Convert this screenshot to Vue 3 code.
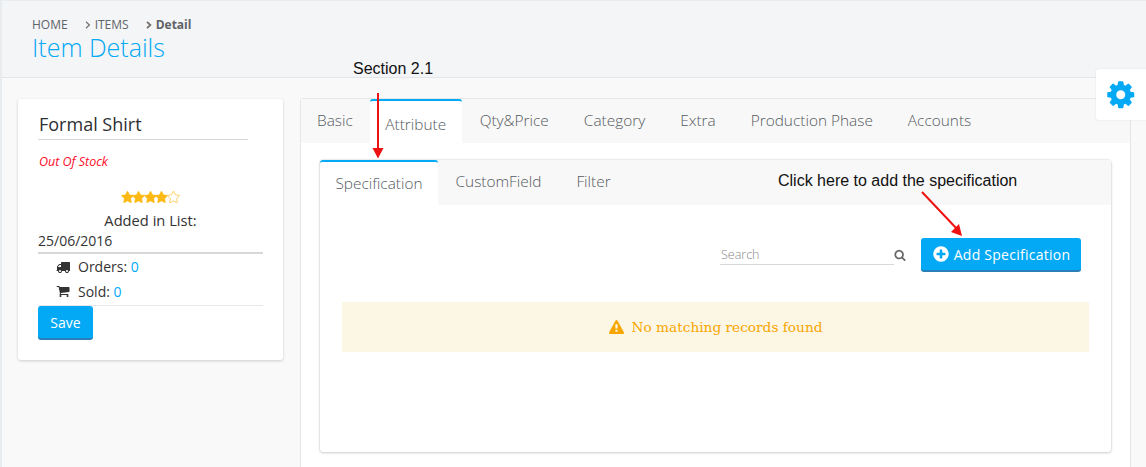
<script setup>
const stars = [1, 2, 3, 4, 5]
const mainTabs = ['Basic', 'Attribute', 'Qty&Price', 'Category', 'Extra', 'Production Phase', 'Accounts']
const subTabs = ['Specification', 'CustomField', 'Filter']
const starPath = 'M1728 647q0 22-26 48l-363 354 86 500q1 7 1 20 0 21-10.500 35.500t-30.500 14.500q-19 0-40-12l-449-236-449 236q-22 12-40 12-21 0-31.500-14.500t-10.500-35.500q0-6 2-20l86-500-364-354q-25-27-25-48 0-37 56-46l502-73 225-455q19-41 49-41t49 41l225 455 502 73q56 9 56 46z'
</script>

<template>
  <div class="page">
    <header class="top">
      <div class="crumbs">
        <span class="crumb">HOME</span>
        <span class="crumb crumb-items">
          <svg class="angle" viewBox="0 0 6 8"><path d="M1 .8 4.400 4 1 7.200" /></svg>ITEMS
        </span>
        <span class="crumb crumb-last">
          <svg class="angle bold" viewBox="0 0 6 8"><path d="M1 .8 4.400 4 1 7.200" /></svg>Detail
        </span>
      </div>
      <h1>Item Details</h1>
    </header>

    <div class="content">
      <aside class="card">
        <h2>Formal Shirt</h2>
        <p class="stock">Out Of Stock</p>
        <div class="stars">
          <svg v-for="s in stars" :key="s" :class="{ empty: s === 5 }" viewBox="0 0 1792 1792"><path :d="starPath" /></svg>
        </div>
        <p class="added">Added in List:</p>
        <p class="date">25/06/2016</p>
        <div class="stat">
          <svg viewBox="0 0 1792 1792"><path d="M640 1408q0-52-38-90t-90-38-90 38-38 90 38 90 90 38 90-38 38-90zm-384-512h384v-256h-158q-13 0-22 9l-195 195q-9 9-9 22v30zm1280 512q0-52-38-90t-90-38-90 38-38 90 38 90 90 38 90-38 38-90zm256-1088v1024q0 15-4 26.500t-13.500 18.500-16.500 11.500-23.500 6-22.500 2-25.500 0-22.500-.5q0 106-75 181t-181 75-181-75-75-181h-384q0 106-75 181t-181 75-181-75-75-181h-64q-3 0-22.500.5t-25.500 0-22.500-2-23.500-6-16.500-11.500-13.500-18.500-4-26.500q0-26 19-45t45-19v-320q0-8-.5-35t0-38 2.500-34.500 6.500-37 14-30.500 22.500-30l198-198q19-19 50.500-32t58.500-13h160v-192q0-26 19-45t45-19h1024q26 0 45 19t19 45z" /></svg>
          <span>Orders: <b>0</b></span>
        </div>
        <div class="stat stat-last">
          <svg viewBox="0 0 1792 1792"><path d="M704 1536q0 52-38 90t-90 38-90-38-38-90 38-90 90-38 90 38 38 90zm896 0q0 52-38 90t-90 38-90-38-38-90 38-90 90-38 90 38 38 90zm128-1088v512q0 24-16.500 42.500t-40.500 21.500l-1044 122q13 60 13 70 0 16-24 64h920q26 0 45 19t19 45-19 45-45 19h-1024q-26 0-45-19t-19-45q0-11 8-31.500t16-36 21.500-40 15.500-29.500l-177-823h-204q-26 0-45-19t-19-45 19-45 45-19h256q16 0 28.500 6.500t19.500 15.500 13 24.500 8 26 5.500 29.500 4.500 26h1201q26 0 45 19t19 45z" /></svg>
          <span>Sold: <b>0</b></span>
        </div>
        <button class="btn save">Save</button>
      </aside>

      <main class="panel">
        <nav class="tabs">
          <a v-for="t in mainTabs" :key="t" :class="{ active: t === 'Attribute' }">{{ t }}</a>
        </nav>
        <section class="inner">
          <nav class="tabs sub">
            <a v-for="t in subTabs" :key="t" :class="{ active: t === 'Specification' }">{{ t }}</a>
          </nav>
          <div class="tools">
            <div class="search">
              <span class="field">Search</span>
              <svg viewBox="0 0 1792 1792"><path d="M1216 832q0-185-131.500-316.500t-316.500-131.500-316.500 131.500-131.500 316.500 131.500 316.500 316.500 131.500 316.500-131.500 131.500-316.500zm512 832q0 52-38 90t-90 38q-54 0-90-38l-343-342q-179 124-399 124-143 0-273.500-55.500t-225-150-150-225-55.500-273.500 55.500-273.500 150-225 225-150 273.500-55.500 273.500 55.500 225 150 150 225 55.500 273.500q0 220-124 399l343 343q37 37 37 90z" /></svg>
            </div>
            <button class="btn add">
              <svg viewBox="0 0 1792 1792"><path d="M1344 960v-128q0-26-19-45t-45-19h-256v-256q0-26-19-45t-45-19h-128q-26 0-45 19t-19 45v256h-256q-26 0-45 19t-19 45v128q0 26 19 45t45 19h256v256q0 26 19 45t45 19h128q26 0 45-19t19-45v-256h256q26 0 45-19t19-45zm320-64q0 209-103 385.500t-279.500 279.500-385.500 103-385.500-103-279.500-279.500-103-385.500 103-385.500 279.500-279.500 385.500-103 385.500 103 279.500 279.500 103 385.500z" /></svg>
              Add Specification
            </button>
          </div>
          <div class="alert">
            <svg viewBox="0 0 1792 1792"><path d="M1024 1375v-190q0-14-9.500-23.500t-22.500-9.500h-192q-13 0-22.500 9.500t-9.500 23.500v190q0 14 9.500 23.500t22.500 9.500h192q13 0 22.500-9.500t9.500-23.500zm-2-374l18-459q0-12-10-19-13-11-24-11h-220q-11 0-24 11-10 7-10 21l17 457q0 10 10 16.500t24 6.500h185q14 0 23.500-6.500t10.500-16.500zm-14-934l768 1408q35 63-2 126-17 29-46.500 46t-63.500 17h-1536q-34 0-63.500-17t-46.500-46q-37-63-2-126l768-1408q17-31 47-49t65-18 65 18 47 49z" /></svg>
            No matching records found
          </div>
        </section>
      </main>
    </div>

    <div class="gear">
      <svg viewBox="0 0 1792 1792"><path d="M1152 896q0-106-75-181t-181-75-181 75-75 181 75 181 181 75 181-75 75-181zm512-109v222q0 12-8 23t-20 13l-185 28q-19 54-39 91 35 50 107 138 10 12 10 25t-9 23q-27 37-99 108t-94 71q-12 0-26-9l-138-108q-44 23-91 38-16 136-29 186-7 28-36 28h-222q-14 0-24.500-8.500t-11.500-21.500l-28-184q-49-16-90-37l-141 107q-10 9-25 9-14 0-25-11-126-114-165-168-7-10-7-23 0-12 8-23 15-21 51-66.500t54-70.500q-27-50-41-99l-183-27q-13-2-21-12.500t-8-23.500v-222q0-12 8-23t19-13l186-28q14-46 39-92-40-57-107-138-10-12-10-24 0-10 9-23 26-36 98.500-107.500t94.500-71.500q13 0 26 10l138 107q44-23 91-38 16-136 29-186 7-28 36-28h222q14 0 24.500 8.500t11.500 21.500l28 184q49 16 90 37l142-107q9-9 24-9 13 0 25 10 129 119 165 170 7 8 7 22 0 12-8 23-15 21-51 66.500t-54 70.500q26 50 41 98l183 28q13 2 21 12.500t8 23.500z" /></svg>
    </div>

    <span class="note note-section">Section 2.1</span>
    <span class="note note-click">Click here to add the specification</span>
    <svg class="arrow arrow-section" viewBox="0 0 14 66">
      <path class="shaft" d="M7 0V56" />
      <path class="head" d="M1.500 55H12.500L7 65.500Z" />
    </svg>
    <svg class="arrow arrow-click" viewBox="0 0 44 46">
      <path class="shaft" d="M1 1 36 38" />
      <path class="head" d="M41 45 30 41 38 33Z" />
    </svg>
  </div>
</template>

<style scoped>
.page {
  position: relative;
  width: 1146px;
  height: 467px;
  overflow: hidden;
  box-sizing: border-box;
  border-left: 2px solid #e9ecef;
  border-top: 1px solid #eaedf0;
  background: #f9f9f9;
  color: #333;
  font-family: "Open Sans", sans-serif;
}

.top {
  height: 77px;
  box-sizing: border-box;
  padding: 15px 0 0 30px;
  background: #f3f5f7;
  border-bottom: 1px solid #e2e5e9;
}

.crumbs {
  display: flex;
  height: 16px;
  font-size: 12px;
  line-height: 18px;
  color: #5f6368;
}

.crumb-items {
  margin-left: 17px;
}

.crumb-last {
  margin-left: 17px;
  font-weight: 700;
}

.angle {
  width: 6px;
  height: 8px;
  margin-right: 4px;
  fill: none;
  stroke: #77706a;
  stroke-width: 1.200;
}

.angle.bold {
  stroke-width: 1.800;
}

h1 {
  margin: 0;
  font-size: 25px;
  line-height: 30px;
  font-weight: 300;
  color: #03a9f4;
}

.content {
  display: flex;
  align-items: flex-start;
  gap: 17px;
  padding: 21px 0 0 16px;
}

.card {
  width: 265px;
  height: 261px;
  box-sizing: border-box;
  flex: none;
  padding: 14px 20px 0;
  background: #fff;
  border-radius: 3px;
  box-shadow: 0 1px 3px rgba(0, 0, 0, 0.18);
  font-size: 14px;
  color: #333;
}

h2 {
  width: 210px;
  box-sizing: border-box;
  margin: 0;
  padding: 0 0 4px 1px;
  border-bottom: 1px solid #d8d8d8;
  font-size: 18px;
  line-height: 22px;
  font-weight: 400;
  color: #2d2f33;
}

.stock {
  margin: 13px 0 0;
  padding-left: 1px;
  font-size: 12.500px;
  line-height: 17px;
  font-style: italic;
  color: #ff0a28;
}

.stars {
  display: flex;
  justify-content: center;
  margin-top: 21px;
  height: 14px;
  padding-right: 2px;
}

.stars svg {
  width: 13px;
  height: 13px;
  margin-right: -1.500px;
  fill: #fdb913;
  stroke: #fdb913;
  stroke-width: 60;
}

.stars svg.empty {
  fill: #fff;
  stroke-width: 90;
}

.added {
  margin: 5px 0 0;
  text-align: center;
  font-size: 14.700px;
  line-height: 20px;
}

.date {
  margin: 1px 0 0;
  padding-bottom: 1px;
  line-height: 20px;
  border-bottom: 2px solid #d8d8d8;
}

.stat {
  display: flex;
  align-items: center;
  gap: 8px;
  height: 25px;
  padding-left: 18px;
}

.stat svg {
  width: 14px;
  height: 14px;
  fill: #333;
}

.stat b {
  font-weight: 400;
  color: #03a9f4;
}

.stat-last {
  height: 27px;
  border-bottom: 1px solid #e8e8e8;
  padding-bottom: 2px;
  box-sizing: border-box;
}

.btn {
  display: block;
  border: 0;
  border-bottom: 2px solid #2980b9;
  border-radius: 3px;
  background: #03a9f4;
  color: #fff;
  font-family: inherit;
  font-size: 14px;
  padding: 0;
}

.save {
  width: 55px;
  height: 34px;
}

.panel {
  width: 831px;
  height: 400px;
  flex: none;
  margin-top: -1px;
  box-sizing: border-box;
  border: 1px solid #e4e6e8;
  border-radius: 3px;
  background: #fff;
}

.tabs {
  display: flex;
  height: 44px;
  background: #f8f8f8;
}

.tabs a {
  box-sizing: border-box;
  height: 44px;
  padding: 0 17.500px;
  font-size: 15.400px;
  line-height: 44px;
  font-weight: 300;
  color: #555a60;
}

.tabs a:first-child {
  margin-left: -1.500px;
}

.tabs a.active {
  padding-top: 2px;
  padding-left: 15px;
  padding-right: 16px;
  background: #fff;
  border-top: 2px solid #03a9f4;
  border-radius: 3px 3px 0 0;
  line-height: 44px;
}

.inner {
  height: 292px;
  box-sizing: border-box;
  margin: 17px 19px 0 19px;
  border-radius: 3px;
  background: #fff;
  box-shadow: 0 0 2px rgba(0, 0, 0, 0.22), 0 1px 3px rgba(0, 0, 0, 0.14);
}

.tabs.sub {
  height: 45px;
}

.tabs.sub a {
  height: 45px;
  line-height: 44px;
}

.tabs.sub a:first-child {
  margin-left: 0;
}

.tabs.sub a.active {
  width: 118px;
  padding: 0;
  text-align: center;
}

.tools {
  display: flex;
  justify-content: flex-end;
  align-items: center;
  gap: 15px;
  padding: 33px 30px 0 0;
}

.search {
  display: flex;
  align-items: center;
}

.field {
  width: 174px;
  height: 20px;
  box-sizing: border-box;
  border-bottom: 1px solid #d8d8d8;
  padding-left: 1px;
  font-size: 12.500px;
  line-height: 19px;
  font-weight: 300;
  color: #888;
}

.search svg {
  width: 12px;
  height: 12px;
  fill: #666;
}

.add {
  display: flex;
  align-items: center;
  justify-content: center;
  gap: 4px;
  width: 160px;
  height: 34px;
  letter-spacing: 0.250px;
}

.add svg {
  width: 18px;
  height: 18px;
  fill: #fff;
}

.alert {
  display: flex;
  justify-content: center;
  align-items: center;
  gap: 8px;
  height: 50px;
  margin: 30px 22px 0;
  background: #fcf6e4;
  color: #f7a600;
  font-family: "DejaVu Serif", serif;
  font-size: 13.700px;
}

.alert svg {
  width: 15px;
  height: 15px;
  fill: #f7a600;
}

.gear {
  position: absolute;
  top: 68px;
  right: 0;
  display: flex;
  align-items: center;
  padding-left: 9px;
  width: 50px;
  height: 51px;
  box-sizing: border-box;
  background: #fff;
  border-radius: 3px 0 0 3px;
  box-shadow: 0 0 2px rgba(0, 0, 0, 0.1);
}

.gear svg {
  width: 31.500px;
  height: 31.500px;
  fill: #03a9f4;
}

.note {
  position: absolute;
  font-family: "Liberation Sans", sans-serif;
  font-size: 16px;
  line-height: 18px;
  color: #111;
  white-space: nowrap;
}

.note-section {
  left: 351px;
  top: 59px;
}

.note-click {
  left: 776px;
  top: 171px;
}

.arrow {
  position: absolute;
  overflow: visible;
}

.shaft {
  fill: none;
  stroke: #ee1111;
  stroke-width: 2;
}

.head {
  fill: #ee1111;
}

.arrow-section {
  left: 369px;
  top: 92px;
  width: 14px;
  height: 66px;
}

.arrow-click {
  left: 919px;
  top: 190px;
  width: 44px;
  height: 46px;
}
</style>
